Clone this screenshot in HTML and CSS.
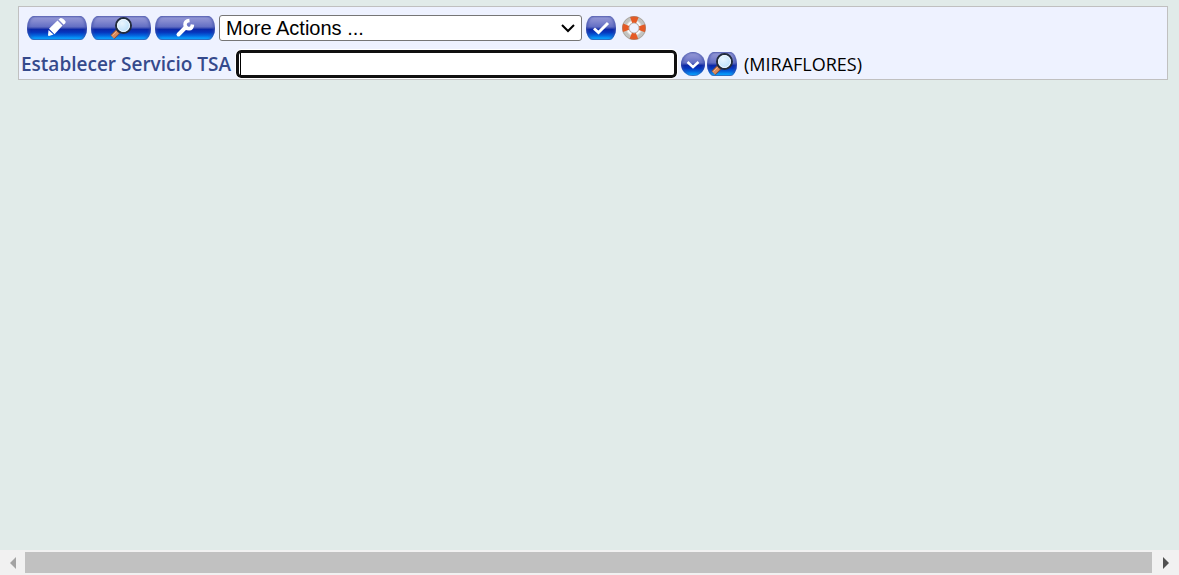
FILE: index.html
```html
<!DOCTYPE html>
<html lang="es">
<head>
<meta charset="utf-8">
<title>Establecer Servicio TSA</title>
<link rel="stylesheet" href="styles.css">
</head>
<body>
<svg class="defs" width="0" height="0" aria-hidden="true">
  <defs>
    <radialGradient id="glass" cx=".4" cy=".35" r=".7"><stop offset="0" stop-color="#eaf6ff"/><stop offset="1" stop-color="#b4dcfa"/></radialGradient>
    <radialGradient id="ring"><stop offset=".5" stop-color="#c4c4c4"/><stop offset=".75" stop-color="#fff"/><stop offset="1" stop-color="#c4c4c0"/></radialGradient>
    <symbol id="magnifier" viewBox="0 0 24 24">
      <path d="M3.500 21L10 14.500" stroke="#7b4a3c" stroke-width="6"/>
      <path d="M3.500 21L8.500 16" stroke="#d98a5c" stroke-width="4"/>
      <path d="M3.500 19.500L7.500 15.500" stroke="#f4b48a" stroke-width="1"/>
      <circle cx="14.500" cy="9.500" r="7.500" fill="url(#glass)" stroke="#222c3c" stroke-width="2"/>
      <circle cx="14.500" cy="9.500" r="6" fill="none" stroke="#f4faff" stroke-width="1"/>
    </symbol>
  </defs>
</svg>
<main class="content">
  <form class="panel">
    <div class="row toolbar">
      <button class="pill wide" type="button" aria-label="Editar">
        <svg width="24" height="24" viewBox="0 0 24 24"><path d="M3 19.500L3.500 14L8.500 18.500L4 20Z" fill="#fff"/><path d="M4 12.800L12.500 4.500L17.500 9.500L9.500 18.200Z" fill="#fff"/><path d="M13.500 3.500L15.500 2Q18.500 2 20.500 5.500V7L18.700 8.700Z" fill="#fff"/></svg>
      </button>
      <button class="pill wide" type="button" aria-label="Buscar"><svg width="24" height="24"><use href="#magnifier"/></svg></button>
      <button class="pill wide" type="button" aria-label="Herramientas">
        <svg width="24" height="24" viewBox="0 0 24 24"><path d="M5.500 18.500L12.500 11.500" stroke="#fff" stroke-width="4" fill="none" stroke-linecap="round"/><path d="M16.500 4.500Q12 5 12 8.500Q12.500 12.800 16 12.800Q19.200 12.500 19.500 8.500" stroke="#fff" stroke-width="3.500" fill="none"/></svg>
      </button>
      <select class="actions" aria-label="More Actions"><option>More Actions ...</option></select>
      <button class="pill" type="button" aria-label="Aceptar">
        <svg width="24" height="24" viewBox="0 0 24 24"><path d="M5 12.500L9.500 16.500L19 7" fill="none" stroke="#fff" stroke-width="3"/></svg>
      </button>
      <button class="help" type="button" aria-label="Ayuda">
        <svg width="24" height="24" viewBox="0 0 24 24"><circle cx="12" cy="12" r="8.500" fill="none" stroke="url(#ring)" stroke-width="7"/><circle cx="12" cy="12" r="8.500" fill="none" stroke="#e65a24" stroke-width="6.500" stroke-dasharray="6.400 6.952" stroke-dashoffset="3.200"/><circle cx="12" cy="12" r="11.500" fill="none" stroke="#8d8279" stroke-width="1" opacity=".4"/><circle cx="12" cy="12" r="5" fill="none" stroke="#a08c80" stroke-width="1" opacity=".6"/></svg>
      </button>
    </div>
    <div class="row field">
      <label for="servicio">Establecer Servicio TSA</label>
      <input id="servicio" class="service" type="text">
      <span class="tools">
        <button class="pill round" type="button" aria-label="Mostrar opciones">
          <svg width="24" height="24" viewBox="0 0 24 24"><path d="M6.500 10L12 15L17.500 10" fill="none" stroke="#fff" stroke-width="2.500"/></svg>
        </button>
        <button class="pill" type="button" aria-label="Buscar servicio"><svg width="24" height="24"><use href="#magnifier"/></svg></button>
      </span>
      <span class="place">(MIRAFLORES)</span>
    </div>
  </form>
</main>
<footer class="scrollbar">
  <button class="arrow off" type="button" aria-label="Izquierda"><svg width="6" height="12"><path d="M6 0V12L0 6Z"/></svg></button>
  <div class="thumb"></div>
  <button class="arrow" type="button" aria-label="Derecha"><svg width="6" height="12"><path d="M0 0V12L6 6Z"/></svg></button>
</footer>
</body>
</html>
```
FILE: styles.css
```css
* { box-sizing: border-box; }
body {
  margin: 0;
  min-height: 100vh;
  display: flex;
  flex-direction: column;
  background: #e1ebe9;
  color: #000;
  font-family: "Trebuchet MS", "Open Sans", sans-serif;
  font-size: 18px;
}
.defs { position: absolute; }
.content { flex: 1; padding: 6px 11px 0 18px; }
.panel {
  background: #eef2ff;
  border: 1px solid #c0c0c0;
  padding: 8px 2px 1px;
}
.row { display: flex; align-items: center; }
.toolbar { gap: 4px; padding-left: 6px; height: 26px; }
.field { gap: 4px; margin-top: 9px; height: 28px; }
button { padding: 0; border: 0; background: none; flex: none; }
svg { display: block; }
.pill {
  width: 30px;
  height: 24px;
  display: flex;
  justify-content: center;
  border-radius: 7px / 12px;
  background: linear-gradient(#6b70ba 0, #8f94d4 8%, #868bd0 20%, #636fc4 45%, #4050b4 50%, #0b28a8 56%, #0636bd 68%, #0468e0 82%, #08a2ff 94%, #3a6db8 100%);
  box-shadow: inset 2px 0 2px #3c4da780, inset -2px 0 2px #3c4da780;
}
.wide { width: 60px; }
.round { width: 24px; border-radius: 50%; }
.help { margin-left: 2px; }
.actions {
  width: 363px;
  height: 26px;
  padding: 0 6px;
  border: 1px solid #767676;
  border-radius: 3px;
  appearance: none;
  background: #fff url("data:image/svg+xml,%3Csvg xmlns='http://www.w3.org/2000/svg' width='14' height='10'%3E%3Cpath d='M1 2L7 8L13 2' fill='none' stroke='%23000' stroke-width='2'/%3E%3C/svg%3E") right 6px center no-repeat;
  color: #000;
  font: 20px "Liberation Sans", Arial, sans-serif;
}
label { color: #354a8c; font-size: 19px; font-weight: 600; white-space: nowrap; width: 211px; }
.service {
  width: 441px;
  height: 28px;
  padding: 0 4px;
  border: 3px solid #101010;
  border-radius: 5px;
  outline: 1px solid #fff;
  background: linear-gradient(#000, #000) 1px 0 / 1px 100% no-repeat #fff;
  font: 20px "Liberation Sans", Arial, sans-serif;
}
.tools { display: flex; gap: 2px; }
.place { margin-left: 3px; }
.scrollbar {
  display: flex;
  align-items: stretch;
  height: 25px;
  background: #f1f1f1;
}
.arrow { width: 25px; display: grid; place-items: center; fill: #505050; }
.off { fill: #a3a3a3; }
.arrow:last-child { width: 27px; }
.thumb { flex: 1; margin: 2px 0; background: #c1c1c1; }
```
